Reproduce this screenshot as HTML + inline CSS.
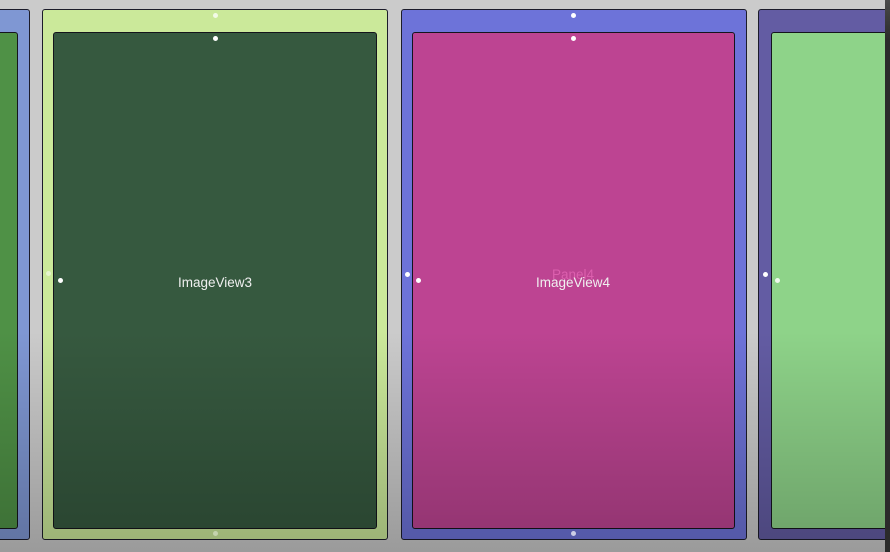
<!DOCTYPE html>
<html>
<head>
<meta charset="utf-8">
<style>
html,body{margin:0;padding:0;background:#ccc}
#s{position:relative;width:890px;height:552px;overflow:hidden;background:#cbcbcb;font-family:"Liberation Sans",sans-serif}
.p,.i{position:absolute;box-sizing:border-box;border:1px solid #1c1c2a;border-radius:3px}
.p{top:9px;height:531px}
.i{top:32px;height:497px;border-color:#14141c}
.t{position:absolute;top:274.5px;color:#f0f0f0;font-size:13.5px;line-height:16px;width:120px;text-align:center;filter:blur(.25px)}
.d{position:absolute;width:5px;height:5px;border-radius:50%;background:#fff}
#o{position:absolute;left:0;top:0;width:890px;height:552px;background:linear-gradient(to bottom,rgba(0,0,0,0) 0,rgba(0,0,0,0) 60%,rgba(0,0,0,.24) 100%);pointer-events:none}
#r{position:absolute;left:885px;top:0;width:5px;height:552px;background:linear-gradient(to bottom,#4a4a4a 0,#2b2b2b 40px,#2b2b2b 100%)}
</style>
</head>
<body>
<div id="s">
<div class="p" style="left:-20px;width:50px;background:#7f97d3"></div>
<div class="i" style="left:-20px;width:38px;background:#4f9146"></div>

<div class="p" style="left:42px;width:346px;background:#cbe99a"></div>
<div class="i" style="left:53px;width:324px;background:#36593f"></div>

<div class="p" style="left:401px;width:346px;background:#6d73d9"></div>
<div class="i" style="left:412px;width:323px;background:#bd4492"></div>

<div class="p" style="left:758px;width:160px;background:#635ca3"></div>
<div class="i" style="left:771px;width:140px;background:#8ed389"></div>

<div class="t" style="left:513px;top:267px;color:#dc5fae">Panel4</div>

<div id="o"></div>

<div class="t" style="left:155px">ImageView3</div>
<div class="t" style="left:513px">ImageView4</div>

<div class="d" style="left:213px;top:13px;opacity:.75"></div>
<div class="d" style="left:213px;top:36px"></div>
<div class="d" style="left:46px;top:271px;opacity:.5"></div>
<div class="d" style="left:58px;top:278px"></div>
<div class="d" style="left:213px;top:531px;opacity:.4"></div>

<div class="d" style="left:571px;top:13px"></div>
<div class="d" style="left:571px;top:36px"></div>
<div class="d" style="left:405px;top:272px"></div>
<div class="d" style="left:416px;top:278px"></div>
<div class="d" style="left:571px;top:531px;opacity:.7"></div>

<div class="d" style="left:763px;top:272px"></div>
<div class="d" style="left:775px;top:278px;opacity:.85"></div>

<div id="r"></div>
</div>
</body>
</html>
